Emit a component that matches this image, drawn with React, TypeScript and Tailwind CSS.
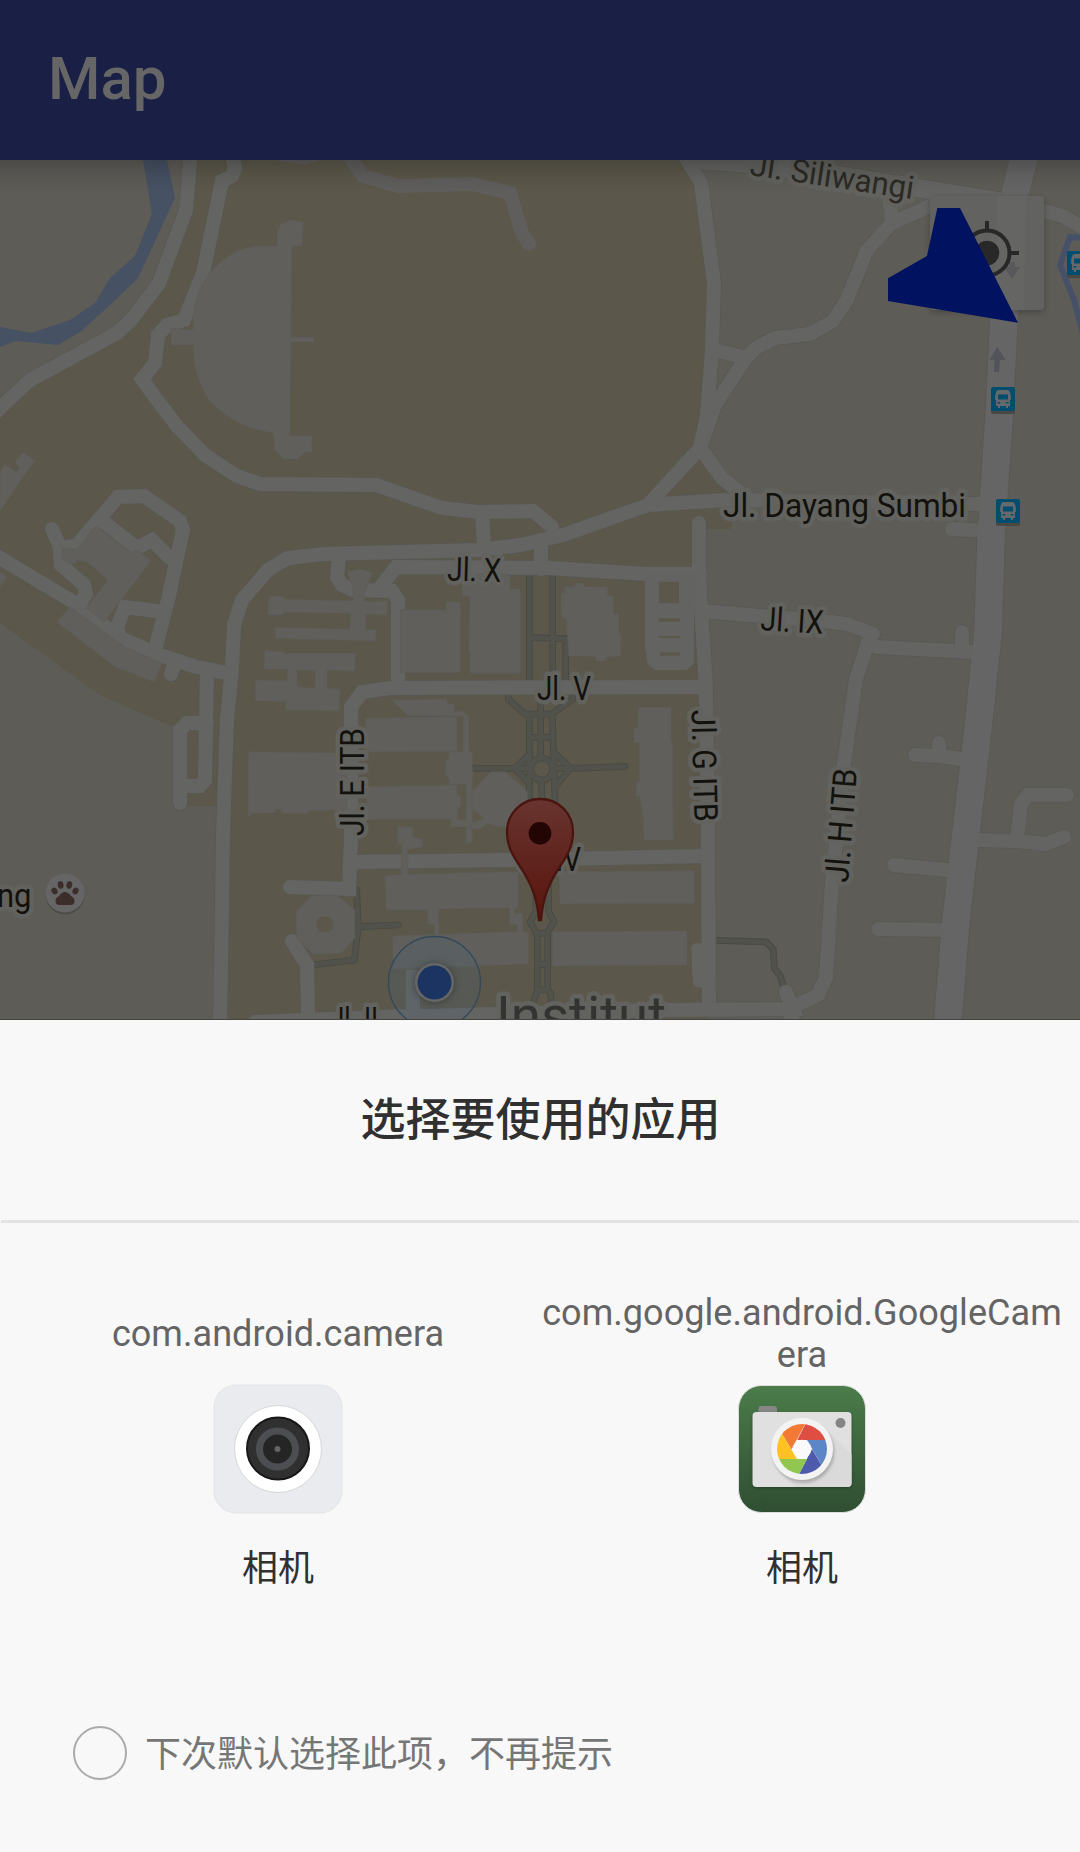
import React from "react";

const ROAD = "#646462";
const BUILDING = "#605f5b";
const CASING = "#585853";

// Centre lines of the ordinary streets, 14px wide.
const roads = [
  "M191 150L186 210L159 283L131 320L117 333L30 380L0 408L-10 418",
  "M231 150L235 168L232 176L222 181L203 273L184 320L167 325L158 335L155 363L142 379L157 400L177 426L205 455L237 476L260 484L376 485L442 508L478 512L533 511L552 527",
  "M482 512L484 548",
  "M220 1030L223 833L227 720L232 667L234 625L242 600L268 570L288 558L323 554L480 550L520 545L563 535L648 505L700 448L707 417L712 350L714 283L701 183L678 145",
  "M648 505L725 500L980 504",
  "M700 448L722 478L750 500",
  "M703 440L715 405L746 358L756 348L775 338L810 334L833 321L847 300L867 250L892 223L930 206L955 199L1000 201",
  "M888 185L892 222",
  "M715 350L746 358",
  "M1020 205L1063 216L1090 232",
  "M541 540L541 569",
  "M379 589L396 567L550 568L647 574L700 574",
  "M339 557L337 577L342 585L353 590L392 591L398 600L398 685",
  "M290 887L349 889L351 840L351 707L362 692L390 688L700 687",
  "M351 862L507 860L706 856",
  "M699 523L699 575L701 607L706 687L708 840L709 1007",
  "M702 611L760 616L823 621L847 624L873 634",
  "M870 636L856 679L843 771L832 882L826 978L818 995L793 1007",
  "M255 1022L380 1017L660 1010L793 1009L786 992",
  "M788 1009L800 1035",
  "M877 647L973 652",
  "M962 632L962 650",
  "M952 529L990 531",
  "M915 755L940 756L968 760",
  "M939 743L939 756",
  "M978 840L1017 841L1046 844L1064 837",
  "M1017 840L1021 804L1028 795L1067 795",
  "M894 865L956 871",
  "M878 929L950 930",
  "M0 558L75 603L120 638L160 655L193 666L230 674",
  "M-10 552L0 558",
  "M52 529L60 547L61 565L84 585L86 594L80 603",
  "M62 548L77 545L118 497L144 496L180 521L183 530L168 600L155 650",
  "M105 523L137 548L152 540L170 558",
  "M120 637L117 627L125 607L157 611",
  "M171 674L175 662",
  "M207 670L205 780L200 786L182 786",
  "M207 723L187 723L180 730L180 803",
  "M292 941L307 965L308 1018",
];

const paths = [
  "M148 110V418M218 110V418M148 293L257 296V418",
  "M85 465V478L135 522H215L278 478V465",
  "M148 522V780M182 490V650M217 522L225 780M148 592H217",
  "M-15 685H105M272 685L435 680M105 685H150M220 685H272",
  "M150 640L105 685L150 735M225 640L272 685L225 740M185 720V790",
  "M168 1020V1115L150 1145L170 1180H200L222 1145L206 1115V1020",
  "M172 1180V1350L155 1400M203 1180V1350M172 1273H203M172 1350H203L213 1362V1400",
  "M708 1201L860 1206L880 1230L883 1285L900 1306L912 1345",
  "M-370 1050L-365 1160L-377 1260L-500 1275M-365 1160L-245 1155",
];

function Label({
  x,
  y,
  len,
  angle = 0,
  size = 33,
  fill = "#13110c",
  children,
}: {
  x: number;
  y: number;
  len?: number;
  angle?: number;
  size?: number;
  fill?: string;
  children: string;
}) {
  return (
    <text
      transform={`translate(${x} ${y}) rotate(${angle})`}
      fontSize={size}
      fill={fill}
      stroke="#62625f"
      strokeWidth="9"
      strokeLinejoin="round"
      paintOrder="stroke"
      textLength={len}
      lengthAdjust="spacingAndGlyphs"
    >
      {children}
    </text>
  );
}

function Bus({ x, y }: { x: number; y: number }) {
  return (
    <g transform={`translate(${x} ${y})`}>
      <rect y="3" width="24" height="24" rx="2" fill="#484845" />
      <rect width="24" height="24" rx="2" fill="#004d6e" />
      <path
        fill="#66696b"
        d="M8 3h8q3 0 3 3l.8 2v5H19v6h-2v2h-2v-2H9v2H7v-2H5v-6h-.8V8L5 6q0-3 3-3z"
      />
      <path fill="#004d6e" d="M7 7.500h10v5H7zM6.500 15h2.800v1.600H6.500zM14.700 15h2.800v1.600h-2.800z" />
    </g>
  );
}

function CityMap() {
  return (
    <svg
      className="block h-[860px] w-[1080px]"
      viewBox="0 160 1080 860"
      fontFamily="Roboto, sans-serif"
      fill="none"
    >
      <defs>
        <linearGradient id="pin" x1="0" y1="0" x2="0" y2="1">
          <stop offset="0" stopColor="#68342f" />
          <stop offset="0.6" stopColor="#5f211b" />
          <stop offset="1" stopColor="#5c140e" />
        </linearGradient>
        <linearGradient id="shade" x1="0" y1="0" x2="0" y2="1">
          <stop offset="0" stopColor="#000" stopOpacity="0.2" />
          <stop offset="0.5" stopColor="#000" stopOpacity="0.07" />
          <stop offset="1" stopColor="#000" stopOpacity="0" />
        </linearGradient>
        <filter id="soft" x="-20%" y="-20%" width="140%" height="140%">
          <feGaussianBlur stdDeviation="3" />
        </filter>
      </defs>
      <rect y="160" width="1080" height="860" fill="#5d5c57" />
      <path
        fill="#5b574a"
        d="M190 160L186 210L159 283L117 333L30 380L0 408V623L100 695L173 727L187 806H222L220 1020H709L706 687L700 575V529H732V500L700 448L712 350L722 283L701 183L690 160z"
      />
      <path
        fill="#465163"
        d="M143 160L167 160L175 198L138 278L110 305L80 332L58 345L16 341L0 347V327L31 333L70 320L95 303L110 278L135 256L152 214z"
      />
      <path
        d="M1090 238L1070 237L1060 265L1074 300L1086 345"
        stroke="#465169"
        strokeWidth="6"
        strokeLinejoin="round"
      />

      <g transform="translate(480 540) scale(.333333)" strokeLinecap="round" strokeLinejoin="round">
        {[
          ["#494943", 20],
          ["#51524b", 15],
        ].map(([color, width]) => (
          <g key={color} stroke={color as string} strokeWidth={width as number}>
            {paths.map((d) => (
              <path key={d} d={d} />
            ))}
            <circle cx="185" cy="687" r="33" />
          </g>
        ))}
      </g>

      <g stroke={CASING} strokeWidth="15.400" strokeLinecap="round" strokeLinejoin="miter">
        {roads.map((d) => (
          <path key={d} d={d} />
        ))}
      </g>
      <path
        d="M715 161L750 164L837 175L867 180L998 201"
        stroke={CASING}
        strokeWidth="20"
        strokeLinecap="round"
      />
      <path
        d="M1026 150L1011 210L1004 320L999 417L991 538L988 633L976 747L962 867L956 921L947 1030"
        stroke={CASING}
        strokeWidth="29"
      />
      <g stroke={ROAD} strokeWidth="14" strokeLinecap="round" strokeLinejoin="miter">
        {roads.map((d) => (
          <path key={d} d={d} />
        ))}
      </g>
      <path
        d="M345 150L363 176L398 186L472 184L510 193L522 233L529 244"
        stroke="#605e5c"
        strokeWidth="14"
        strokeLinecap="round"
      />
      <path d="M273 160L305 165L322 160z" fill="#605e5c" />
      <path
        d="M700 160L750 164L837 175L867 180L998 201"
        stroke={ROAD}
        strokeWidth="18"
        strokeLinecap="round"
      />
      <path
        d="M1026 150L1011 210L1004 320L999 417L991 538L988 633L976 747L962 867L956 921L947 1030"
        stroke="#656565"
        strokeWidth="27.500"
      />
      <path d="M413 970V1015" stroke={ROAD} strokeWidth="14" />

      <g fill={BUILDING} stroke="#5c5c57" strokeWidth="0.6">
        <path d="M277 246V232L281 224L290 220L303 222L302 246H292L291 337H314V342H291L290 400V436H312V452H305L297 459H284L275 450L273 433Q235 428 209 400Q193 375 193 345H171V328L193 330Q192 300 205 280Q227 247 262 246z" />
        <path d="M0 472L5 464L16 472L20 468L15 462L23 452L35 461L23 477L0 511zM0 572L7 577L0 587z" />
        <path d="M96 526L131 553L136 549L151 561L104 622L86 608L108 580L87 562L77 560L75 564L68 563L62 558L63 548L77 549z" />
        <path d="M70 607L125 647L162 663L154 682L115 667L57 622z" />
      </g>

      <g
        transform="translate(240 540) scale(.333333)"
        fill={BUILDING}
        stroke="#5c5c57"
        strokeWidth="2"
        fillRule="evenodd"
      >
        <path d="M322 95L358 87L397 97L375 155L372 185L443 183L440 225L376 222L378 268L408 270L407 303L105 295V262L330 268L332 220L130 217V225H83L88 168L132 170V178L340 183V150z" />
        <path d="M72 387L75 332L133 335V340H346L345 393L261 391V445L300 447L297 513L138 510L137 485L45 482L47 420L142 422V388zM171 391V440L225 445V391z" />
        <path d="M482 398V209H618V185L661 187L660 398z" />
        <path d="M667 170L665 103H810V147H842V400H690V340L686 330L690 170z" />
        <path d="M455 480L620 477L622 490L642 492V514H665L687 528V635L697 637V907H678V860H632V838H380V740L651 735V765L663 767V800L652 803V838L678 842V733L627 732V715L617 708V665L627 655V635H669V528H505z" />
        <path d="M377 535L651 530V634L377 636z" />
        <path d="M25 635L320 640V810L207 812V820H125V808H105V818L33 820V828H24z" />
        <path d="M753 695H795L862 755V785L800 860L765 858L745 850L715 868L696 866V850L732 835L696 805V755z" />
        <path d="M473 860H519V892L547 897V920L520 925L503 930V1003L835 995V1100L824 1105V1120H848V1175L865 1178V1272L460 1287L458 1188L583 1183V1155L563 1153V1110H438L435 1008L485 1003V910H473zM595 1107L597 1183L833 1175V1155L808 1153V1103z" />
        <path d="M215 1067L290 1065L345 1110V1193L303 1240L220 1243L170 1195L168 1115zM240 1130L230 1140V1162L240 1176H267L279 1165V1142L267 1130z" />
      </g>

      <g
        transform="translate(480 540) scale(.333333)"
        fill={BUILDING}
        stroke="#5c5c57"
        strokeWidth="2"
        fillRule="evenodd"
      >
        <path d="M243 158H254V140H282L290 130H308L312 140L382 141V165L400 167V222H417V278L424 290L420 349L380 350L376 363H348V349L266 348L260 238L250 236L243 225z" />
        <path
          fill="#636361"
          stroke="none"
          d="M495 100V320L503 372L525 390H620L642 370V180L660 100zM537 125V190H597V125zM536 235V245H600V235zM536 288V294H600V288zM540 337V347H600V337z"
        />
        <path d="M475 502H573V600L578 620L579 900H492L490 840L480 770H468V730L478 722V608H462V565L474 562z" />
        <path d="M237 995L643 992V1090L240 1092zM217 1175L621 1173V1275L217 1278z" />
        <path fill={ROAD} stroke="none" d="M645 1210H670V1342H652Q638 1338 638 1320L634 1230Q634 1212 645 1210z" />
      </g>

      <path fill="#53535a" d="M997.500 347L1005.500 360H1000L999 372H994L994.500 360H989z" />

      <Label x={749} y={175} len={165} angle={8.4} size={32} fill="#2b2a25">Jl. Siliwangi</Label>
      <Label x={723} y={517} len={243}>Jl. Dayang Sumbi</Label>
      <Label x={447} y={580.5} len={54} angle={1.5}>Jl. X</Label>
      <Label x={760} y={630} len={63} angle={3.5}>Jl. IX</Label>
      <Label x={537} y={700} len={54}>Jl. V</Label>
      <Label x={519} y={871} len={62}>Jl. IV</Label>
      <Label x={330} y={1031} len={48}>Jl. II</Label>
      <Label x={363.5} y={836} len={108} angle={-90}>Jl. E ITB</Label>
      <Label x={691.5} y={710} len={112} angle={88.5}>Jl. G ITB</Label>
      <Label x={848} y={883} len={114} angle={-85.500}>Jl. H ITB</Label>
      <Label x={-3} y={907} len={34.500} size={34}>ng</Label>
      <Label x={496} y={1034} len={170} size={53} fill="#333332">Institut</Label>

      <circle cx="65" cy="895" r="19.500" fill="#4b4b47" />
      <circle cx="65" cy="893" r="19.500" fill="#656565" />
      <g fill="#3b2d29">
        <ellipse cx="54.500" cy="891" rx="2.900" ry="3.500" transform="rotate(-30 54.500 891)" />
        <ellipse cx="60.700" cy="885" rx="2.900" ry="3.700" transform="rotate(-10 60.700 885)" />
        <ellipse cx="69.300" cy="885" rx="2.900" ry="3.700" transform="rotate(10 69.300 885)" />
        <ellipse cx="75.500" cy="891" rx="2.900" ry="3.500" transform="rotate(30 75.500 891)" />
        <path d="M65 892q3 0 6 4q3.500 2 3.500 5q0 4-4 4h-11q-4 0-4-4q0-3 3.500-5q3-4 6-4z" />
      </g>

      <Bus x={991} y={387} />
      <Bus x={996} y={499} />
      <Bus x={1067} y={251} />

      <circle cx="434.500" cy="982.500" r="46" fill="#48627c" fillOpacity="0.2" stroke="#33485b" strokeWidth="1.300" />
      <circle cx="434.500" cy="983" r="21" fill="#333" opacity="0.5" filter="url(#soft)" />
      <circle cx="434.500" cy="982.500" r="19.500" fill="#666" />
      <circle cx="434.500" cy="982.500" r="17" fill="#1b3461" />

      <g transform="translate(480 540) scale(.333333)">
        <path
          d="M180 777C236 777 279 820 279 877C279 925 255 955 232 992C205 1035 188 1075 183 1140H177C172 1075 155 1035 128 992C105 955 81 925 81 877C81 820 124 777 180 777z"
          fill="url(#pin)"
          stroke="#4a140f"
          strokeWidth="7"
        />
        <circle cx="180" cy="880" r="34" fill="#230504" />
      </g>

      <rect x="930" y="198" width="114" height="114" rx="4" fill="#000" opacity="0.25" filter="url(#soft)" />
      <rect x="930" y="196" width="114" height="114" rx="3.500" fill="#626260" />
      <path d="M998 196H1026L1024 310H993z" fill="#656564" />
      <path fill="#58585a" d="M1012 279L1004 267H1009V262H1015V267H1020z" />
      <g stroke="#282828">
        <circle cx="987" cy="253" r="22.500" strokeWidth="4" />
        <path strokeWidth="4" d="M987 221V230M1010 253H1019M987 276V285M964 253H955" />
        <circle cx="987" cy="253" r="12.300" fill="#282828" stroke="none" />
      </g>
      <path
        transform="translate(720 150) scale(.333333)"
        fill="#001260"
        d="M652 174H720L894 518L504 453V385L621 318z"
      />
      <rect y="160" width="1080" height="32" fill="url(#shade)" />
      <rect y="1019" width="1080" height="1" fill="#44443f" />
    </svg>
  );
}

function LensIcon() {
  return (
    <svg className="block size-[130px]" viewBox="0 0 130 130">
      <rect x="1" y="1" width="128" height="128" rx="22" fill="#eaebef" stroke="#e3e4e6" />
      <circle cx="65" cy="65" r="43.500" fill="#fff" stroke="#d5d6d8" />
      <circle cx="65" cy="64.500" r="31" fill="#303030" stroke="#181818" strokeWidth="2" />
      <circle cx="64.500" cy="65" r="18" fill="#252525" stroke="#4d4e51" strokeWidth="7" />
      <circle cx="64.500" cy="65" r="3" fill="#636363" />
    </svg>
  );
}

function GoogleCameraIcon() {
  return (
    <svg className="block size-[130px]" viewBox="0 0 130 130">
      <defs>
        <linearGradient id="green" x1="0" y1="0" x2="0" y2="1">
          <stop offset="0" stopColor="#4b7c4a" />
          <stop offset="1" stopColor="#304e32" />
        </linearGradient>
        <clipPath id="lens">
          <circle cx="65" cy="65" r="25" />
        </clipPath>
        <filter id="lift" x="-20%" y="-20%" width="140%" height="140%">
          <feGaussianBlur stdDeviation="1.500" />
        </filter>
      </defs>
      <rect x="1.500" y="1.500" width="127" height="127" rx="23" fill="url(#green)" stroke="#dcdedc" />
      <rect x="21.500" y="22" width="18.500" height="12" rx="3" fill="#868686" />
      <rect x="15.500" y="30" width="99" height="74" rx="4" fill="#1d2f1e" opacity="0.6" filter="url(#lift)" />
      <rect x="15.500" y="28" width="99" height="75" rx="4" fill="#e0e0e0" />
      <path d="M88 46L114.500 70V99Q114.500 103 110 103H58L43 88z" fill="#dadada" />
      <circle cx="66.500" cy="68" r="31" fill="#000" opacity="0.2" filter="url(#lift)" />
      <circle cx="103.500" cy="39" r="5" fill="#858585" />
      <circle cx="65" cy="65" r="31" fill="#f3f3f3" />
      <g clipPath="url(#lens)">
        <circle cx="65" cy="65" r="12" fill="#fafafa" />
        <path d="M36.700 36L73.500 30L54.500 65.500z" fill="#f37a34" />
        <path d="M73.500 30L105 56H60.300z" fill="#de4e43" />
        <path d="M105 56L95 99L70 56z" fill="#5d86c6" />
        <path d="M95 99L57 100L75 65z" fill="#4e5aab" />
        <path d="M57 100L25 75H70z" fill="#91c650" />
        <path d="M25 75L36.700 36L60 75z" fill="#ffc124" />
      </g>
      <circle cx="65" cy="65" r="9.300" fill="#fafafa" />
    </svg>
  );
}

function AppChoice({ pkg, name, icon }: { pkg: string; name: string; icon: React.ReactNode }) {
  return (
    <div className="flex w-[524px] flex-col items-center">
      <div className="flex h-[84px] w-full flex-col justify-center text-center text-[36px] leading-[42px] tracking-[0.05px] break-all text-[#646464]">
        <p>{pkg}</p>
      </div>
      <div className="mt-[8px]">{icon}</div>
      <p className="mt-[29px] text-[36px] leading-[52px] text-[#303030]">{name}</p>
    </div>
  );
}

export default function App() {
  return (
    <div className="flex h-[1852px] w-[1080px] flex-col overflow-hidden bg-[#f8f8f8] font-['Roboto','Noto_Sans_CJK_SC',sans-serif]">
      <header className="flex h-[160px] shrink-0 items-center bg-[#191f45] pb-[3px] pl-[48px]">
        <h1 className="text-[60px] leading-[70px] font-medium text-[#666666]">Map</h1>
      </header>
      <main className="shrink-0">
        <CityMap />
      </main>
      <section className="flex grow flex-col">
        <h2 className="flex h-[200px] items-center justify-center pt-[2px] pl-px text-[45px] leading-[60px] font-medium text-[#303030]">
          选择要使用的应用
        </h2>
        <div className="mx-px h-[3px] bg-[#e3e3e3]" />
        <div className="flex pt-[69px] pl-[16px]">
          <AppChoice pkg="com.android.camera" name="相机" icon={<LensIcon />} />
          <AppChoice pkg="com.google.android.GoogleCamera" name="相机" icon={<GoogleCameraIcon />} />
        </div>
        <label className="mt-[131px] flex items-center pl-[73px]">
          <span className="size-[54px] rounded-full border-2 border-[#ababab]" />
          <span className="ml-[18px] pt-[4px] text-[36px] leading-[50px] text-[#767676]">
            下次默认选择此项，不再提示
          </span>
        </label>
      </section>
    </div>
  );
}
